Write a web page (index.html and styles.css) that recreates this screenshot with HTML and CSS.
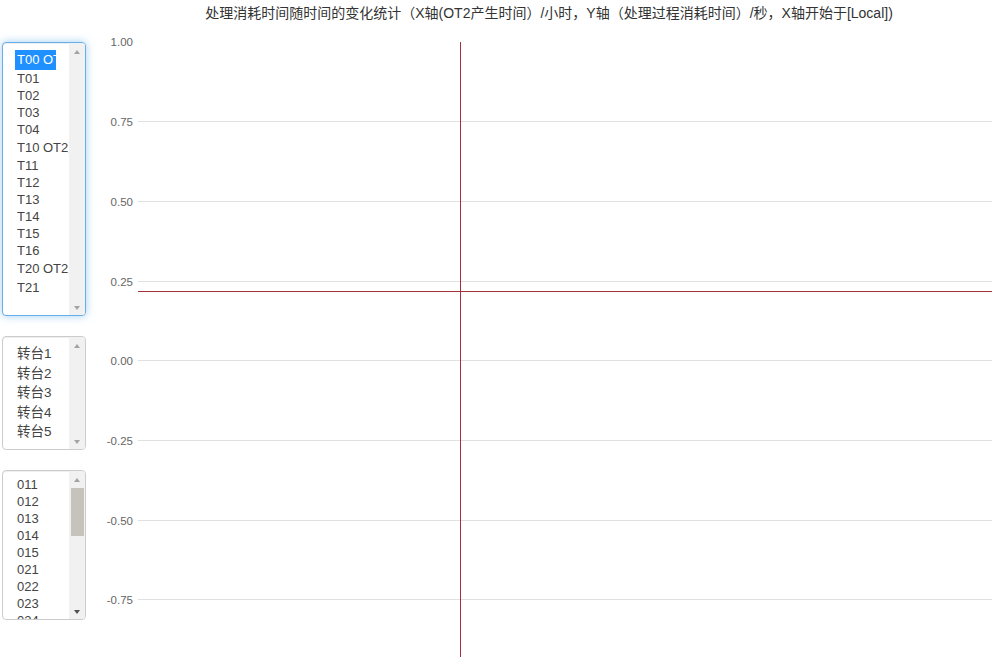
FILE: index.html
```html
<!DOCTYPE html>
<html lang="zh-CN">
<head>
<meta charset="utf-8">
<title>处理消耗时间统计</title>
<link rel="stylesheet" href="styles.css">
</head>
<body>
<div class="page">
  <aside class="sidebar">
    <div class="listbox lb1">
      <div class="items">
        <div class="opt tall sel">T00 OT2工位</div>
        <div class="opt">T01</div>
        <div class="opt">T02</div>
        <div class="opt">T03</div>
        <div class="opt">T04</div>
        <div class="opt tall">T10 OT2工位</div>
        <div class="opt">T11</div>
        <div class="opt">T12</div>
        <div class="opt">T13</div>
        <div class="opt">T14</div>
        <div class="opt">T15</div>
        <div class="opt">T16</div>
        <div class="opt tall">T20 OT2工位</div>
        <div class="opt">T21</div>
      </div>
      <div class="sbar">
        <span class="arr up"></span>
        <span class="track"></span>
        <span class="arr down"></span>
      </div>
    </div>

    <div class="listbox lb2">
      <div class="items">
        <div class="opt tall">转台1</div>
        <div class="opt tall">转台2</div>
        <div class="opt tall">转台3</div>
        <div class="opt tall">转台4</div>
        <div class="opt tall">转台5</div>
      </div>
      <div class="sbar">
        <span class="arr up"></span>
        <span class="track"></span>
        <span class="arr down"></span>
      </div>
    </div>

    <div class="listbox lb3">
      <div class="items">
        <div class="opt">011</div>
        <div class="opt">012</div>
        <div class="opt">013</div>
        <div class="opt">014</div>
        <div class="opt">015</div>
        <div class="opt">021</div>
        <div class="opt">022</div>
        <div class="opt">023</div>
        <div class="opt">024</div>
        <div class="opt">025</div>
        <div class="opt">031</div>
        <div class="opt">032</div>
      </div>
      <div class="sbar">
        <span class="arr up"></span>
        <span class="track"><span class="thumb"></span></span>
        <span class="arr down dark"></span>
      </div>
    </div>
  </aside>

  <main class="chart">
    <div class="title">处理消耗时间随时间的变化统计（X轴(OT2产生时间）/小时，Y轴（处理过程消耗时间）/秒，X轴开始于[Local])</div>
    <svg class="plot" width="914" height="627" viewBox="0 0 914 627">
      <g class="grid">
        <line x1="46" x2="900" y1="91.5" y2="91.5"/>
        <line x1="46" x2="900" y1="171.5" y2="171.5"/>
        <line x1="46" x2="900" y1="251.5" y2="251.5"/>
        <line x1="46" x2="900" y1="330.5" y2="330.5"/>
        <line x1="46" x2="900" y1="410.5" y2="410.5"/>
        <line x1="46" x2="900" y1="490.5" y2="490.5"/>
        <line x1="46" x2="900" y1="569.5" y2="569.5"/>
      </g>
      <g class="labels">
        <text x="41" y="12">1.00</text>
        <text x="41" y="92">0.75</text>
        <text x="41" y="172">0.50</text>
        <text x="41" y="252">0.25</text>
        <text x="41" y="331">0.00</text>
        <text x="41" y="411">-0.25</text>
        <text x="41" y="491">-0.50</text>
        <text x="41" y="570">-0.75</text>
      </g>
      <g class="cross">
        <line x1="368.5" x2="368.5" y1="12" y2="627"/>
        <line x1="46" x2="900" y1="261.5" y2="261.5"/>
      </g>
    </svg>
  </main>
</div>
</body>
</html>
```

FILE: styles.css
```css
html, body {
  margin: 0;
  padding: 0;
  background: #fff;
}

body {
  font-family: "Liberation Sans", "Noto Sans CJK SC", sans-serif;
  color: #333;
}

.page {
  display: flex;
  width: 1006px;
  height: 657px;
  overflow: hidden;
}

.sidebar {
  width: 92px;
  flex: none;
  box-sizing: border-box;
  padding: 42px 0 0 2px;
  display: flex;
  flex-direction: column;
  gap: 20px;
}

.listbox {
  width: 84px;
  box-sizing: border-box;
  border: 1px solid #ccc;
  border-radius: 4px;
  display: flex;
  overflow: hidden;
  background: #fff;
  box-shadow: inset 0 1px 1px rgba(0, 0, 0, .075);
}

.lb1 {
  height: 274px;
  border-color: #66afe9;
  box-shadow: inset 0 1px 1px rgba(0, 0, 0, .075), 0 0 8px rgba(102, 175, 233, .6);
}

.lb2 {
  height: 114px;
}

.lb3 {
  height: 150px;
}

.items {
  flex: 1;
  min-width: 0;
  padding: 7px 13px 0 12px;
  overflow: hidden;
  font-size: 13px;
  color: #444;
}

.lb2 .items {
  font-size: 13.5px;
}

.lb3 .items {
  padding-top: 5px;
}

.opt {
  height: 17px;
  line-height: 17px;
  padding: 0 2px;
  white-space: nowrap;
}

.opt.tall {
  height: 19.5px;
  line-height: 19.5px;
}

.opt.sel {
  background: #1e90ff;
  color: #fff;
}

.sbar {
  width: 16px;
  flex: none;
  background: #f1f1f1;
  display: flex;
  flex-direction: column;
}

.arr {
  height: 15px;
  flex: none;
  display: flex;
  align-items: center;
  justify-content: center;
}

.arr.up {
  padding-top: 1px;
}

.arr::before {
  content: "";
  width: 0;
  height: 0;
  border-left: 3.5px solid transparent;
  border-right: 3.5px solid transparent;
}

.arr.up::before {
  border-bottom: 4px solid #a3a3a3;
}

.arr.down::before {
  border-top: 4px solid #a3a3a3;
}

.arr.down.dark::before {
  border-top-color: #505050;
}

.track {
  flex: 1;
  display: flex;
  flex-direction: column;
}

.thumb {
  height: 48px;
  margin: 1px 1px 0 2px;
  background: #c6c3bd;
}

.chart {
  flex: 1;
  min-width: 0;
  display: flex;
  flex-direction: column;
}

.title {
  height: 30px;
  box-sizing: border-box;
  padding-top: 3px;
  line-height: 20px;
  font-size: 14px;
  color: #333;
  text-align: center;
  white-space: nowrap;
}

.plot {
  display: block;
  flex: none;
}

.grid line {
  stroke: #e0e0e0;
  stroke-width: 1;
  shape-rendering: crispEdges;
}

.labels text {
  font-family: "Liberation Sans", sans-serif;
  font-size: 11.5px;
  fill: #666;
  text-anchor: end;
  dominant-baseline: central;
}

.cross line {
  stroke: #a2313b;
  stroke-width: 1;
  shape-rendering: crispEdges;
}
```
